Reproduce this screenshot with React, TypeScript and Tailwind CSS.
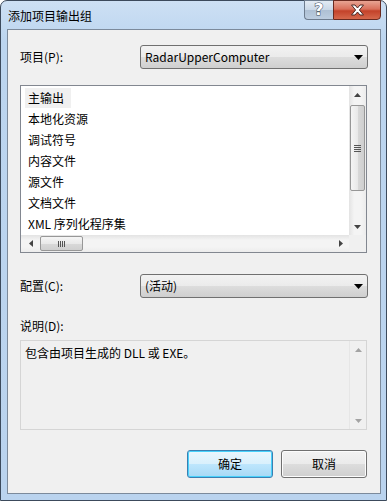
import React from "react";

const font = { fontFamily: '"Noto Sans CJK SC", "Noto Sans", sans-serif' };

function DownTri({ color = "#000" }: { color?: string }) {
  return (
    <svg width="9" height="5" viewBox="0 0 9 5">
      <path d="M0 0 H9 L4.5 5 Z" fill={color} />
    </svg>
  );
}

function ScrollArrow({ dir, color = "#444" }: { dir: "up" | "down" | "left" | "right"; color?: string }) {
  const d =
    dir === "up"
      ? "M0 4 H7 L3.5 0 Z"
      : dir === "down"
      ? "M0 0 H7 L3.5 4 Z"
      : dir === "left"
      ? "M4 0 V7 L0 3.5 Z"
      : "M0 0 V7 L4 3.5 Z";
  const vert = dir === "up" || dir === "down";
  return (
    <svg width={vert ? 7 : 4} height={vert ? 4 : 7} viewBox={vert ? "0 0 7 4" : "0 0 4 7"}>
      <path d={d} fill={color} />
    </svg>
  );
}

function Combo({ text }: { text: string }) {
  return (
    <div className="flex h-[24px] w-[228px] items-center justify-between rounded-[3px] border border-[#707070] bg-[linear-gradient(#f2f2f2_0%,#ebebeb_50%,#dddddd_50%,#cfcfcf_100%)] pl-[4px] pr-[4px] text-[12px] leading-none text-black">
      <span className="pb-[1px]">{text}</span>
      <DownTri />
    </div>
  );
}

function Button({ text, def }: { text: string; def?: boolean }) {
  return (
    <div
      className={
        def
          ? "flex h-[28px] w-[86px] items-center justify-center rounded-[3px] border border-[#3c7fb1] bg-[linear-gradient(#eaf6fd_0%,#d9f0fc_50%,#bee6fd_50%,#a7d9f5_100%)] shadow-[inset_0_0_0_1px_#48d1fb] text-[12px] leading-none text-black"
          : "flex h-[28px] w-[86px] items-center justify-center rounded-[3px] border border-[#707070] bg-[linear-gradient(#f2f2f2_0%,#ebebeb_50%,#dddddd_50%,#cfcfcf_100%)] shadow-[inset_0_0_0_1px_#fcfcfc] text-[12px] leading-none text-black"
      }
    >
      {text}
    </div>
  );
}

export default function App() {
  const items = ["主输出", "本地化资源", "调试符号", "内容文件", "源文件", "文档文件", "XML 序列化程序集"];
  return (
    <div className="h-[501px] w-[387px] bg-white" style={font}>
      <div className="flex h-[501px] w-[387px] flex-col rounded-t-[7px] border border-[#3c4a5c] bg-[linear-gradient(#cde0f4,#bcd5ef_40px,#bad3ee)]">
        {/* Title bar */}
        <div className="flex h-[28px] items-start justify-between pl-[7px] pr-[5px]">
          <div className="pt-[8px] text-[12px] leading-[14px] text-black">添加项目输出组</div>
          <div className="-mt-px flex h-[20px]">
            <div className="flex h-[20px] w-[29px] items-center justify-center rounded-bl-[4px] border border-r-0 border-[#6d7c8e] bg-[linear-gradient(#e3ebf4_0%,#c9d7e6_50%,#aec0d4_52%,#bccde0_100%)]">
              <span
                className="pb-px text-[16px] font-bold leading-none text-white"
                style={{ fontFamily: '"DejaVu Sans", sans-serif', WebkitTextStroke: "1px #3c4a5c", paintOrder: "stroke fill" }}
              >
                ?
              </span>
            </div>
            <div className="flex h-[20px] w-[48px] items-center justify-center rounded-br-[4px] border border-[#6a2a20] bg-[linear-gradient(#e8a493_0%,#d9705b_45%,#c3422a_55%,#d5684c_100%)]">
              <svg width="15" height="12" viewBox="0 0 15 12">
                <path
                  d="M1.5 1 L5 1 L7.5 4 L10 1 L13.5 1 L9.4 6 L13.5 11 L10 11 L7.5 8 L5 11 L1.5 11 L5.6 6 Z"
                  fill="#ffffff"
                  stroke="#4b2a26"
                  strokeWidth="1"
                  strokeLinejoin="round"
                />
              </svg>
            </div>
          </div>
        </div>

        {/* Client */}
        <div className="mb-[6px] ml-[6px] mr-[5px] flex flex-1 flex-col border border-[#7c8a9b] bg-[#f0f0f0] px-[12px]">
          {/* Project row */}
          <div className="mt-[15px] flex h-[24px] items-center justify-between">
            <span className="text-[12px] leading-none">项目(P):</span>
            <Combo text="RadarUpperComputer" />
          </div>

          {/* Listbox */}
          <div className="mt-[16px] flex h-[168px] w-[347px] flex-col border border-[#828790] bg-white">
            <div className="flex flex-1">
              <div className="flex flex-1 flex-col pl-[4px] pt-[1px]">
                {items.map((t, i) => (
                  <div key={t} className="flex h-[21px] items-center">
                    <span
                      className={
                        i === 0
                          ? "flex h-[20px] items-center bg-[#f0f0f0] pl-[3px] pr-[7px] text-[12px] leading-none text-black"
                          : "flex h-[20px] items-center pl-[3px] text-[12px] leading-none text-black"
                      }
                    >
                      {t}
                    </span>
                  </div>
                ))}
              </div>
              {/* vertical scrollbar */}
              <div className="flex w-[17px] flex-col bg-[linear-gradient(90deg,#e3e3e3,#f4f4f4_30%,#f4f4f4_70%,#ececec)]">
                <div className="flex h-[17px] items-center justify-center">
                  <ScrollArrow dir="up" />
                </div>
                <div className="mx-[1px] mt-[2px] flex h-[86px] items-center justify-center rounded-[2px] border border-[#979797] bg-[linear-gradient(90deg,#f5f5f5,#e9e9e9_50%,#d9d9d9_50%,#cfcfcf)]">
                  <div className="flex flex-col gap-[1px]">
                    <div className="h-px w-[7px] bg-[#555]" />
                    <div className="h-px w-[7px] bg-[#555]" />
                    <div className="h-px w-[7px] bg-[#555]" />
                    <div className="h-px w-[7px] bg-[#555]" />
                  </div>
                </div>
                <div className="flex-1" />
                <div className="flex h-[17px] items-center justify-center">
                  <ScrollArrow dir="down" />
                </div>
              </div>
            </div>
            {/* horizontal scrollbar */}
            <div className="flex h-[17px]">
              <div className="flex flex-1 items-center bg-[linear-gradient(#e3e3e3,#f4f4f4_30%,#f4f4f4_70%,#ececec)]">
                <div className="flex w-[19px] items-center justify-center">
                  <ScrollArrow dir="left" />
                </div>
                <div className="flex h-[15px] w-[43px] items-center justify-center rounded-[2px] border border-[#979797] bg-[linear-gradient(#f5f5f5,#e9e9e9_50%,#d9d9d9_50%,#cfcfcf)]">
                  <div className="flex gap-[1px]">
                    <div className="h-[6px] w-px bg-[#555]" />
                    <div className="h-[6px] w-px bg-[#555]" />
                    <div className="h-[6px] w-px bg-[#555]" />
                    <div className="h-[6px] w-px bg-[#555]" />
                  </div>
                </div>
                <div className="flex-1" />
                <div className="flex w-[17px] items-center justify-center">
                  <ScrollArrow dir="right" />
                </div>
              </div>
              <div className="w-[17px] bg-[#f0f0f0]" />
            </div>
          </div>

          {/* Config row */}
          <div className="mt-[21px] flex h-[24px] items-center justify-between">
            <span className="text-[12px] leading-none">配置(C):</span>
            <Combo text="(活动)" />
          </div>

          {/* Description */}
          <div className="mt-[20px] flex h-[16px] items-center text-[12px] leading-none">说明(D):</div>
          <div className="mt-[6px] flex h-[90px] w-[347px] border border-[#d5d5d5] bg-[#f0f0f0]">
            <div className="flex-1 pl-[4px] pt-[5px] text-[12px] leading-[14px] text-black">包含由项目生成的 DLL 或 EXE。</div>
            <div className="flex w-[17px] flex-col border-l border-[#e6e6e6] bg-[#f0f0f0]">
              <div className="flex h-[17px] items-center justify-center">
                <ScrollArrow dir="up" color="#a3a3a3" />
              </div>
              <div className="flex-1" />
              <div className="flex h-[17px] items-center justify-center">
                <ScrollArrow dir="down" color="#a3a3a3" />
              </div>
            </div>
          </div>

          {/* Buttons */}
          <div className="mt-[20px] flex justify-end gap-[8px] pr-px">
            <Button text="确定" def />
            <Button text="取消" />
          </div>
        </div>
      </div>
    </div>
  );
}
